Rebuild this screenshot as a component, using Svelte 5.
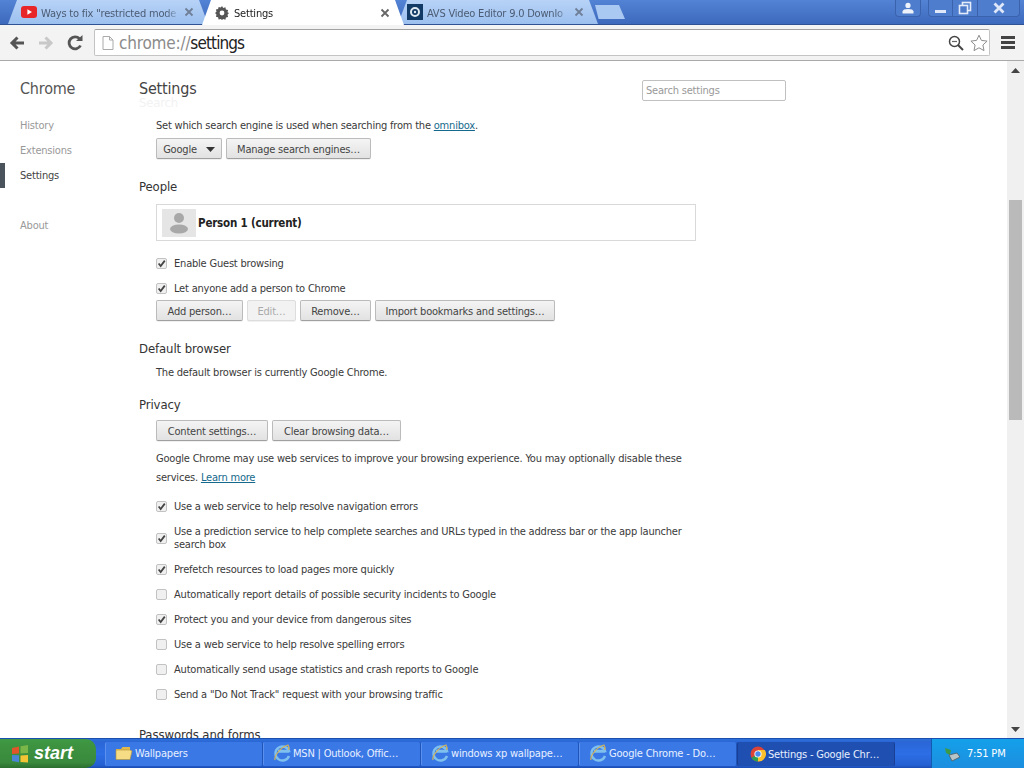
<script>
  const checks = [
    { label: 'Use a web service to help resolve navigation errors', on: true },
    { label: 'Use a prediction service to help complete searches and URLs typed in the address bar or the app launcher search box', on: true },
    { label: 'Prefetch resources to load pages more quickly', on: true },
    { label: 'Automatically report details of possible security incidents to Google', on: false },
    { label: 'Protect you and your device from dangerous sites', on: true },
    { label: 'Use a web service to help resolve spelling errors', on: false },
    { label: 'Automatically send usage statistics and crash reports to Google', on: false },
    { label: 'Send a "Do Not Track" request with your browsing traffic', on: false }
  ];
  const tasks = [
    { label: 'Wallpapers', icon: 'folder' },
    { label: 'MSN | Outlook, Offic…', icon: 'ie' },
    { label: 'windows xp wallpape…', icon: 'ie' },
    { label: 'Google Chrome - Do…', icon: 'ie' },
    { label: 'Settings - Google Chr…', icon: 'chrome', active: true }
  ];
</script>

<div class="screen">
  <header class="tabstrip">
    <div class="tab bg first">
      <svg class="fav" viewBox="0 0 16 16"><rect x="0" y="2" width="16" height="12" rx="3" fill="#e8262a"/><path d="M6.4 5.2 11 8l-4.6 2.8z" fill="#fff"/></svg>
      <span class="tab-title">Ways to fix "restricted mode</span>
      <svg class="close" viewBox="0 0 10 10"><path d="M1.5 1.5l7 7M8.5 1.5l-7 7" stroke="#6f7f97" stroke-width="1.8"/></svg>
    </div>
    <div class="tab act">
      <svg class="fav" viewBox="0 0 16 16"><path d="M8 1l1.2 1.9 2.2-.6.5 2.2 2.2.5-.6 2.2L15 8l-1.5 1.8.6 2.2-2.2.5-.5 2.2-2.2-.6L8 15l-1.2-1.1-2.2.6-.5-2.2-2.2-.5.6-2.2L1 8l1.5-1.2-.6-2.2 2.2-.5.5-2.2 2.2.6z" fill="#555"/><circle cx="8" cy="8" r="2.4" fill="#fff"/></svg>
      <span class="tab-title dark">Settings</span>
      <svg class="close" viewBox="0 0 10 10"><path d="M1.5 1.5l7 7M8.5 1.5l-7 7" stroke="#666" stroke-width="1.8"/></svg>
    </div>
    <div class="tab bg third">
      <svg class="fav" viewBox="0 0 16 16"><rect width="16" height="16" fill="#123a66"/><circle cx="8" cy="8" r="4" fill="none" stroke="#dfe9f2" stroke-width="2"/><circle cx="8" cy="8" r="1.2" fill="#dfe9f2"/></svg>
      <span class="tab-title">AVS Video Editor 9.0 Downlo</span>
      <svg class="close" viewBox="0 0 10 10"><path d="M1.5 1.5l7 7M8.5 1.5l-7 7" stroke="#6f7f97" stroke-width="1.8"/></svg>
    </div>
    <div class="newtab"></div>
    <div class="spacer"></div>
    <div class="winbtn user">
      <svg viewBox="0 0 14 12" width="14" height="12"><circle cx="7" cy="3.4" r="2.6" fill="#eef3fb"/><path d="M1.5 11.5V9.5C1.5 7.8 4 7 7 7s5.500.8 5.500 2.500v2z" fill="#eef3fb"/></svg>
    </div>
    <div class="winctl">
      <div class="wc min"><span></span></div>
      <div class="wc max">
        <svg viewBox="0 0 14 14" width="14" height="14"><rect x="4.500" y="1.500" width="8" height="8" fill="none" stroke="#e4ecf9" stroke-width="1.600"/><rect x="1.500" y="4.500" width="8" height="8" fill="#4d79c9" stroke="#e4ecf9" stroke-width="1.600"/></svg>
      </div>
      <div class="wc cls">
        <svg viewBox="0 0 14 12" width="14" height="12"><path d="M2.500 1.500l9 9M11.500 1.500l-9 9" stroke="#dfe8f8" stroke-width="2.800"/></svg>
      </div>
    </div>
  </header>

  <div class="toolbar">
    <svg class="nav" viewBox="0 0 18 18"><path d="M16 9H5M9.500 3.500 4 9l5.500 5.500" fill="none" stroke="#555" stroke-width="3"/></svg>
    <svg class="nav" viewBox="0 0 18 18"><path d="M2 9h11M8.500 3.500 14 9l-5.500 5.500" fill="none" stroke="#c8c8c8" stroke-width="3"/></svg>
    <svg class="nav reload" viewBox="0 0 18 18"><path d="M14.500 11.500A6 6 0 1 1 13.500 4.800" fill="none" stroke="#555" stroke-width="2.800"/><path d="M10 7h6.500V1z" fill="#555"/></svg>
    <div class="omnibox">
      <svg class="page" viewBox="0 0 12 14" width="12" height="14"><path d="M1 .5h6.500l3.500 3.500v9.500H1z" fill="#fff" stroke="#aaa"/><path d="M7.500 .5V4H11" fill="none" stroke="#aaa"/></svg>
      <span class="url"><span class="scheme">chrome://</span><span class="path">settings</span></span>
      <span class="spacer"></span>
      <svg class="zoomico" viewBox="0 0 16 16" width="16" height="16"><circle cx="6.500" cy="6.500" r="5" fill="none" stroke="#444" stroke-width="1.500"/><path d="M4 6.500h5" stroke="#666" stroke-width="1.200"/><path d="M10 10l5 5" stroke="#444" stroke-width="2"/></svg>
      <svg class="star" viewBox="0 0 18 18" width="18" height="18"><path d="M9 1.200l2.400 5.200 5.700.7-4.200 3.900 1.100 5.600L9 13.800l-5 2.800 1.100-5.600L.9 7.100l5.700-.7z" fill="#fff" stroke="#8d8d8d"/></svg>
    </div>
    <div class="menu"><i></i><i></i><i></i></div>
  </div>

  <div class="viewport">
    <nav class="side">
      <h1>Chrome</h1>
      <ul>
        <li>History</li>
        <li>Extensions</li>
        <li class="sel">Settings</li>
        <li class="about">About</li>
      </ul>
    </nav>
    <main class="content">
      <div class="head">
        <h2>Settings</h2>
        <div class="search">Search settings</div>
      </div>
      <div class="ghost">Search</div>
      <div class="body">
        <p class="line first-line">Set which search engine is used when searching from the <a href="#o">omnibox</a>.</p>
        <div class="btns b1">
          <span class="btn select">Google<svg viewBox="0 0 9 5" width="9" height="5"><path d="M0 0h9L4.500 5z" fill="#333"/></svg></span>
          <span class="btn manage">Manage search engines…</span>
        </div>

        <h3 class="people">People</h3>
        <div class="profile">
          <div class="avatar">
            <svg viewBox="0 0 34 28" width="34" height="28"><circle cx="17" cy="9" r="5" fill="#a8a8a8"/><ellipse cx="17" cy="20" rx="9" ry="4.500" fill="#a8a8a8"/></svg>
          </div>
          <strong>Person 1 (current)</strong>
        </div>
        <label class="chk mt-guest"><span class="box on"><svg viewBox="0 0 11 11"><path d="M2 5.500l2.500 3L9.500 2" fill="none" stroke="#444" stroke-width="2.200"/></svg></span><span>Enable Guest browsing</span></label>
        <label class="chk mt-anyone"><span class="box on"><svg viewBox="0 0 11 11"><path d="M2 5.500l2.500 3L9.500 2" fill="none" stroke="#444" stroke-width="2.200"/></svg></span><span>Let anyone add a person to Chrome</span></label>
        <div class="btns b2">
          <span class="btn w-add">Add person…</span>
          <span class="btn off w-edit">Edit…</span>
          <span class="btn w-rem">Remove…</span>
          <span class="btn w-imp">Import bookmarks and settings…</span>
        </div>

        <h3 class="default">Default browser</h3>
        <p class="line def-text">The default browser is currently Google Chrome.</p>

        <h3 class="privacy">Privacy</h3>
        <div class="btns b3">
          <span class="btn w-content">Content settings…</span>
          <span class="btn w-clear">Clear browsing data…</span>
        </div>
        <p class="para">Google Chrome may use web services to improve your browsing experience. You may optionally disable these services. <a href="#l">Learn more</a></p>

        <div class="checks">
          {#each checks as c}
            <label class="chk item">
              <span class="box" class:on={c.on}>
                {#if c.on}<svg viewBox="0 0 11 11"><path d="M2 5.500l2.500 3L9.500 2" fill="none" stroke="#444" stroke-width="2.200"/></svg>{/if}
              </span>
              <span class="chk-text">{c.label}</span>
            </label>
          {/each}
        </div>

        <h3 class="pw">Passwords and forms</h3>
      </div>
    </main>
    <aside class="scrollbar">
      <svg class="arr" viewBox="0 0 9 5" width="9" height="5"><path d="M4.500 0 9 5H0z" fill="#444"/></svg>
      <div class="track"><div class="thumb"></div></div>
      <svg class="arr" viewBox="0 0 9 5" width="9" height="5"><path d="M0 0h9L4.500 5z" fill="#444"/></svg>
    </aside>
  </div>

  <footer class="taskbar">
    <div class="start">
      <svg viewBox="0 0 20 20" width="20" height="20"><path d="M2 4l7-1.500v7L2 10z" fill="#e0562a"/><path d="M10.500 2.200 18 1v8l-7.500.4z" fill="#7ab648"/><path d="M2 11l7 .3v7L2 17z" fill="#4a86d8"/><path d="M10.500 11.400 18 11v7.500l-7.500-.4z" fill="#f3c534"/></svg>
      <span>start</span>
    </div>
    <div class="tasks">
      {#each tasks as t}
        <div class="task" class:active={t.active}>
          {#if t.icon === 'folder'}
            <svg viewBox="0 0 18 16" width="18" height="16"><path d="M1 4h5l1.500-2H15v3H1z" fill="#e0b94d"/><path d="M1 5h14l2 1-2 8.500H1z" fill="#f6dc85" stroke="#b89433" stroke-width=".6"/></svg>
          {:else if t.icon === 'ie'}
            <svg viewBox="0 0 18 18" width="18" height="18"><path d="M16 12a7 7 0 1 1 0-5H5M5 7.500h11" fill="none" stroke="#7fc0ee" stroke-width="2.400"/><path d="M2 16C1 13 6 4 15 1c1.500 2 1 4 .5 5" fill="none" stroke="#d4b45a" stroke-width="1.200"/></svg>
          {:else}
            <svg viewBox="0 0 16 16" width="16" height="16"><circle cx="8" cy="8" r="7.500" fill="#dc4437"/><path d="M8 8 1.500 11.700A7.500 7.500 0 0 0 8 15.500z" fill="#2fa04f"/><path d="M8 4h6.800A7.500 7.500 0 0 1 8 15.500z" fill="#fbc02d"/><circle cx="8" cy="8" r="3.600" fill="#fff"/><circle cx="8" cy="8" r="2.700" fill="#4a8af0"/></svg>
          {/if}
          <span>{t.label}</span>
        </div>
      {/each}
    </div>
    <div class="tray">
      <svg viewBox="0 0 18 18" width="18" height="18"><path d="M2 3l6 2-1 5-4-2z" fill="#3c9a46"/><path d="M6 10l8-2 3 4-8 4z" fill="#b8c4c8" stroke="#4d5a5e" stroke-width=".8"/></svg>
      <span>7:51 PM</span>
    </div>
  </footer>
</div>

<style>
  :global(body) { margin: 0; overflow: hidden; }
  .screen {
    width: 1024px; height: 768px; display: flex; flex-direction: column; overflow: hidden;
    font-family: "DejaVu Sans Condensed", "DejaVu Sans", sans-serif; font-size: 11px; letter-spacing: -.2px; color: #3a3a3a; background: #fff;
  }
  .tabstrip {
    height: 25px; flex: none; display: flex; align-items: flex-end; padding-left: 8px;
    background: linear-gradient(#5383d4, #3d69bd); box-sizing: border-box; border-bottom: 1px solid #2f5296;
  }
  .tab {
    height: 24px; width: 200px; box-sizing: border-box; margin-right: -6px; display: flex; align-items: center; gap: 4px;
    padding: 0 14px 0 13px; clip-path: polygon(0 100%, 9px 0, calc(100% - 9px) 0, 100% 100%);
  }
  .tab.bg { background: linear-gradient(#b7d2f6, #9cc0ef); }
  .tab.third { padding-left: 9px; }
  .tab.act { background: #fff; height: 25px; margin-bottom: -1px; position: relative; z-index: 1; width: 202px; padding-left: 12px; }
  .tab-title { flex: 1; padding-top: 2px; white-space: nowrap; overflow: hidden; color: #4b5b73; font-size: 11px; -webkit-mask-image: linear-gradient(to right, #000 90%, transparent); mask-image: linear-gradient(to right, #000 90%, transparent); }
  .tab-title.dark { color: #222; }
  .fav { width: 16px; height: 16px; flex: none; }
  .close { width: 10px; height: 10px; flex: none; }
  .newtab { width: 30px; height: 14px; margin: 0 0 5px 3px; background: #a9c9f3; clip-path: polygon(0 0, 80% 0, 100% 100%, 12% 100%); }
  .spacer { flex: 1; }
  .winbtn { align-self: flex-start; width: 24px; height: 16px; display: flex; align-items: center; justify-content: center; border: 1px solid #3a62ad; border-top: 0; border-radius: 0 0 4px 4px; background: #4f7dcd; }
  .winctl { align-self: flex-start; margin: 0 4px 0 7px; display: flex; height: 16px; border: 1px solid #3a62ad; border-top: 0; border-radius: 0 0 4px 4px; background: #4f7dcd; }
  .wc { display: flex; align-items: center; justify-content: center; height: 100%; border-right: 1px solid #3a62ad; }
  .wc.min { width: 24px; align-items: flex-end; padding-bottom: 3px; box-sizing: border-box; }
  .wc.min span { width: 11px; height: 3px; background: #dfe8f8; }
  .wc.max { width: 24px; }
  .wc.cls { width: 41px; border-right: 0; }
  .toolbar {
    height: 36px; flex: none; box-sizing: border-box; display: flex; align-items: center; padding: 0 8px; background: #f3f3f3; border-bottom: 1px solid #a9a9a9;
  }
  .nav { width: 18px; height: 18px; margin-right: 11px; flex: none; margin-left: 0; }
  .reload { margin-right: 10px; }
  .omnibox { width: 896px; height: 27px; flex: none; box-sizing: border-box; display: flex; align-items: center; background: #fff; border: 1px solid #c4c4c4; border-top-color: #a2a2a2; border-radius: 2px; padding: 0 1px 0 7px; }
  .url { margin-left: 5px; font-size: 17px; color: #222; letter-spacing: -.2px; }
  .path { letter-spacing: -.9px; }
  .scheme { color: #8b8b8b; }
  .zoomico { margin-right: 6px; }
  .menu { margin-left: 11px; width: 14px; flex: none; display: flex; flex-direction: column; gap: 2px; }
  .menu i { display: block; height: 3px; background: #444; }
  .viewport { flex: 1; min-height: 0; display: flex; overflow: hidden; position: relative; background: #fff; }
  .side { width: 139px; flex: none; padding: 19px 0 0 0; box-sizing: border-box; }
  .side h1 { margin: 0 0 0 20px; font-size: 16px; font-weight: 400; color: #555; line-height: 18px; }
  .side ul { list-style: none; margin: 15px 0 0; padding: 0; color: #999; }
  .side li { height: 25px; line-height: 25px; padding-left: 20px; }
  .side li.sel { color: #444; box-shadow: inset 5px 0 0 #4a525c; }
  .side li.about { margin-top: 25px; }
  .content { width: 868px; flex: none; box-sizing: border-box; overflow: hidden; }
  .head { display: flex; width: 647px; align-items: center; justify-content: space-between; padding-top: 18px; height: 22px; }
  .head h2 { margin: -2px 0 0; font-size: 16px; font-weight: 400; color: #444; line-height: 20px; }
  .search { width: 144px; height: 21px; box-sizing: border-box; border: 1px solid #c0c0c0; border-radius: 2px; padding: 0 3px; line-height: 19px; color: #999; }
  .ghost { margin-top: -6px; height: 16px; font-size: 13px; color: #f2f2f2; line-height: 16px; }
  .body { padding-left: 17px; width: 541px; }
  .line { margin: 0; line-height: 16px; }
  a { color: #15698c; text-decoration: underline; }
  .first-line { margin-top: 7px; }
  .btns { display: flex; gap: 4px; }
  .btn { height: 21px; padding-top: 1px; box-sizing: border-box; display: inline-flex; align-items: center; justify-content: center; white-space: nowrap; border: 1px solid #bbb; border-bottom-color: #a0a0a0; border-radius: 2px; background: linear-gradient(#f4f4f4, #e2e2e2); color: #444; box-shadow: 0 1px 0 rgba(0,0,0,.06); }
  .btn.off { color: #aaa; background: #f2f2f2; border-color: #ddd; }
  .b1 { margin-top: 4px; }
  .select { width: 66px; gap: 9px; }
  .manage { width: 145px; }
  h3 { margin: 0 0 0 -17px; font-size: 13px; letter-spacing: -.1px; font-weight: 400; color: #333; line-height: 16px; }
  .people { margin-top: 20px; }
  .profile { margin-top: 9px; width: 540px; height: 37px; box-sizing: border-box; border: 1px solid #d9d9d9; display: flex; align-items: center; padding-left: 5px; gap: 2px; }
  .avatar { width: 34px; height: 28px; background: #e5e5e5; flex: none; }
  .avatar svg { display: block; }
  .profile strong { color: #222; font-size: 11.5px; }
  .chk { display: flex; align-items: center; gap: 7px; }
  .mt-guest { margin-top: 14px; height: 16px; }
  .mt-anyone { margin-top: 9px; height: 16px; }
  .box { width: 11px; height: 11px; box-sizing: border-box; flex: none; border: 1px solid #c2c2c2; border-radius: 2px; background: #f0f0f0; display: block; }
  .box svg { display: block; width: 9px; height: 9px; }
  .b2 { margin-top: 4px; }
  .w-add { width: 87px; } .w-edit { width: 49px; } .w-rem { width: 71px; } .w-imp { width: 180px; }
  .default { margin-top: 20px; }
  .def-text { margin-top: 8px; }
  .privacy { margin-top: 16px; }
  .b3 { margin-top: 7px; }
  .w-content { width: 112px; } .w-clear { width: 129px; }
  .para { margin: 8px 0 0; line-height: 19px; width: 540px; }
  .checks { margin-top: 7px; display: flex; flex-direction: column; }
  .item { min-height: 25px; line-height: 13px; }
  .item:nth-child(2) { min-height: 38px; }
  .chk-text { display: block; }
  .pw { margin-top: 20px; }
  .scrollbar { width: 17px; flex: none; margin-left: auto; background: #f0f0f0; display: flex; flex-direction: column; align-items: center; justify-content: space-between; padding: 7px 0 6px; box-sizing: border-box; }
  .arr { flex: none; }
  .track { flex: 1; width: 13px; margin-top: 127px; }
  .thumb { height: 220px; background: #bababa; }
  .taskbar { height: 30px; flex: none; display: flex; align-items: stretch; background: linear-gradient(#2f70d8 0%, #2a66d6 10%, #2d6ee6 50%, #2460d2 90%, #1a4cb2 100%); border-top: 1px solid #1a50b0; box-sizing: border-box; color: #fff; }
  .start { width: 96px; flex: none; display: flex; align-items: center; gap: 4px; padding-left: 10px; box-sizing: border-box; background: linear-gradient(#3f9a45, #3d9340 20%, #3a8a3d 80%, #2c6f2f); border-radius: 0 10px 10px 0; }
  .start span { font: italic 700 18px "Liberation Sans", sans-serif; letter-spacing: 0; color: #fff; }
  .tasks { flex: 1; display: flex; padding: 3px 0 3px 9px; }
  .task { width: 158px; flex: none; box-sizing: border-box; height: 24px; display: flex; align-items: center; gap: 2px; padding: 0 0 2px 9px; background: #3a78e6; border-right: 1px solid #1f55bb; border-left: 1px solid #5b90ee; white-space: nowrap; color: #e8f0ff; border-radius: 2px; }
  .task.active { background: #1f4fb0; border-color: #183f94; padding: 0 0 0 12px; }
  .tray { width: 93px; flex: none; display: flex; align-items: center; gap: 6px; padding-left: 11px; box-sizing: border-box; background: linear-gradient(#14a0ea, #1c8ee0); border-left: 1px solid #0f5cb0; }
</style>
